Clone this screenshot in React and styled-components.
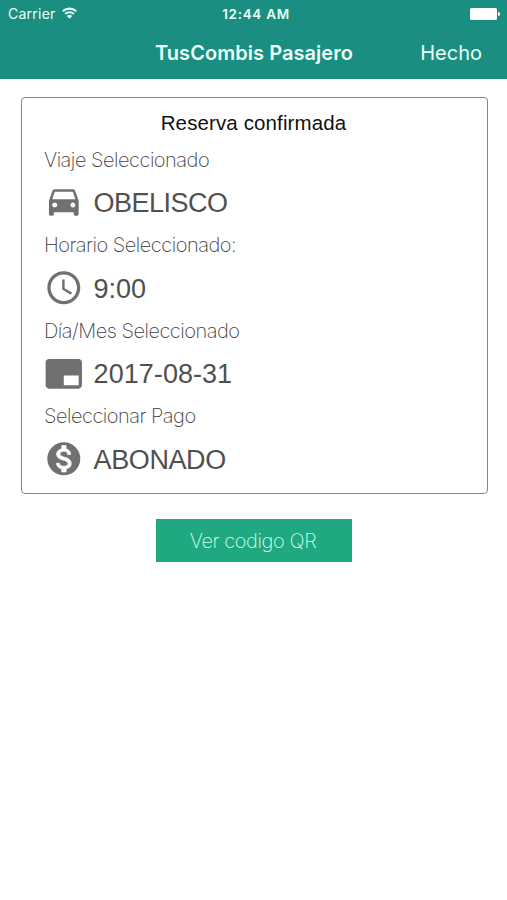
import React from 'react';
import styled, { createGlobalStyle } from 'styled-components';
import { MdAccessTime, MdBrandingWatermark, MdDirectionsCar } from 'react-icons/md';

const GlobalStyle = createGlobalStyle`
  * {
    box-sizing: border-box;
  }

  body {
    margin: 0;
    background: #fff;
    font-family: 'Liberation Sans', Arial, sans-serif;
  }
`;

const Screen = styled.div`
  min-height: 900px;
  background: #fff;
`;

const Header = styled.header`
  height: 79px;
  background: #1a8e80;
  color: #eafffa;
  font-family: Inter, sans-serif;
`;

const StatusBar = styled.div`
  display: grid;
  grid-template-columns: 1fr auto 1fr;
  align-items: center;
  height: 27px;
  padding: 0 7px 0 8px;
`;

const Carrier = styled.div`
  display: flex;
  align-items: center;
  gap: 6px;
  font-size: 14px;
  letter-spacing: 0.25px;

  svg {
    margin-top: -2px;
  }
`;

const Clock = styled.div`
  padding-left: 4px;
  font-size: 13.5px;
  font-weight: 600;
  letter-spacing: 0.7px;
`;

const Battery = styled.svg`
  justify-self: end;
`;

const NavBar = styled.nav`
  display: grid;
  grid-template-columns: 1fr auto 1fr;
  align-items: center;
  height: 51px;
  padding: 0 25px 0 26px;
`;

const NavTitle = styled.h1`
  grid-column: 2;
  margin: 0;
  font-size: 20px;
  font-weight: 600;
  letter-spacing: 0.05px;
`;

const NavAction = styled.button`
  justify-self: end;
  padding: 0;
  border: 0;
  background: none;
  color: inherit;
  font-family: inherit;
  font-size: 20px;
`;

const Content = styled.main`
  display: flex;
  flex-direction: column;
  align-items: center;
  gap: 25px;
  padding: 18px 19px 0 21px;
`;

const Card = styled.section`
  width: 100%;
  height: 397px;
  padding: 9px 22px 0;
  border: 1px solid #858585;
  border-radius: 4px;
`;

const CardTitle = styled.h2`
  margin: 0;
  padding-right: 2px;
  color: #111;
  font-size: 20.5px;
  font-weight: 400;
  letter-spacing: 0.12px;
  line-height: 31.5px;
  text-align: center;
`;

const Field = styled.div`
  height: 85.6px;
`;

const Label = styled.div`
  color: #3c3c3c;
  font-family: Inter, sans-serif;
  font-size: 20px;
  font-weight: 200;
  letter-spacing: -0.5px;
  line-height: 42px;
  white-space: nowrap;
`;

const Value = styled.div`
  display: flex;
  align-items: center;
  gap: 9.8px;
  height: 44px;
  padding-left: 0.2px;
  color: #505050;
  font-size: 27px;
  letter-spacing: ${({ $tracking }) => $tracking || 0}px;

  svg {
    flex: none;
    width: 39.6px;
    height: 39.6px;
    margin-bottom: ${({ $lift }) => $lift || 0}px;
    color: #707070;
  }

  span {
    padding-top: 2px;
  }
`;

const QrButton = styled.button`
  width: 196px;
  height: 43px;
  margin-right: 2px;
  padding: 0 1px 0 0;
  border: 0;
  background: #20a880;
  color: #d5fff0;
  font-family: Inter, sans-serif;
  font-size: 20px;
  font-weight: 200;
  letter-spacing: -0.4px;
`;

const WifiIcon = () => (
  <svg width="15" height="12" viewBox="0 0 15 12" fill="none" stroke="#eafffa" strokeWidth="2.1">
    <path d="M0.8 4.3a9.6 9.6 0 0 1 13.4 0" />
    <path d="M3.2 7a6.2 6.2 0 0 1 8.6 0" />
    <path d="M7.5 11.8L4.8 9a3.8 3.8 0 0 1 5.4 0z" fill="#eafffa" stroke="none" />
  </svg>
);

const MoneyIcon = () => (
  <svg viewBox="0 0 24 24">
    <circle cx="12" cy="12" r="10" fill="currentColor" />
    <path
      fill="#fff"
      stroke="#fff"
      strokeWidth="0.4"
      d="M13.41 18.09V20h-2.67v-1.93c-1.71-.36-3.16-1.46-3.27-3.4h1.96c.1 1.05.82 1.87 2.65 1.87 1.96 0 2.4-.98 2.4-1.59 0-.83-.44-1.61-2.67-2.14-2.48-.6-4.18-1.62-4.18-3.67 0-1.72 1.39-2.84 3.11-3.21V4h2.67v1.95c1.86.45 2.79 1.86 2.85 3.39H14.3c-.05-1.11-.64-1.87-2.22-1.87-1.5 0-2.4.68-2.4 1.64 0 .84.65 1.39 2.67 1.91s4.18 1.39 4.18 3.91c-.01 1.83-1.38 2.83-3.12 3.16z"
    />
  </svg>
);

const fields = [
  { label: 'Viaje Seleccionado', value: 'OBELISCO', Icon: MdDirectionsCar, tracking: -0.5, lift: 4 },
  { label: 'Horario Seleccionado:', value: '9:00', Icon: MdAccessTime },
  { label: 'Día/Mes Seleccionado', value: '2017-08-31', Icon: MdBrandingWatermark, tracking: 0.05 },
  { label: 'Seleccionar Pago', value: 'ABONADO', Icon: MoneyIcon, tracking: -0.4 },
];

const App = () => (
  <>
    <GlobalStyle />
    <Screen>
      <Header>
        <StatusBar>
          <Carrier>
            <span>Carrier</span>
            <WifiIcon />
          </Carrier>
          <Clock>12:44 AM</Clock>
          <Battery width="30" height="12" viewBox="0 0 30 12" fill="#fff">
            <rect width="27" height="12" rx="1.5" />
            <path d="M28 4a2 2 0 0 1 0 4z" />
          </Battery>
        </StatusBar>
        <NavBar>
          <NavTitle>TusCombis Pasajero</NavTitle>
          <NavAction>Hecho</NavAction>
        </NavBar>
      </Header>

      <Content>
        <Card>
          <CardTitle>Reserva confirmada</CardTitle>
          {fields.map(({ label, value, Icon, tracking, lift }) => (
            <Field key={label}>
              <Label>{label}</Label>
              <Value $tracking={tracking} $lift={lift}>
                <Icon />
                <span>{value}</span>
              </Value>
            </Field>
          ))}
        </Card>
        <QrButton>Ver codigo QR</QrButton>
      </Content>
    </Screen>
  </>
);

export default App;
